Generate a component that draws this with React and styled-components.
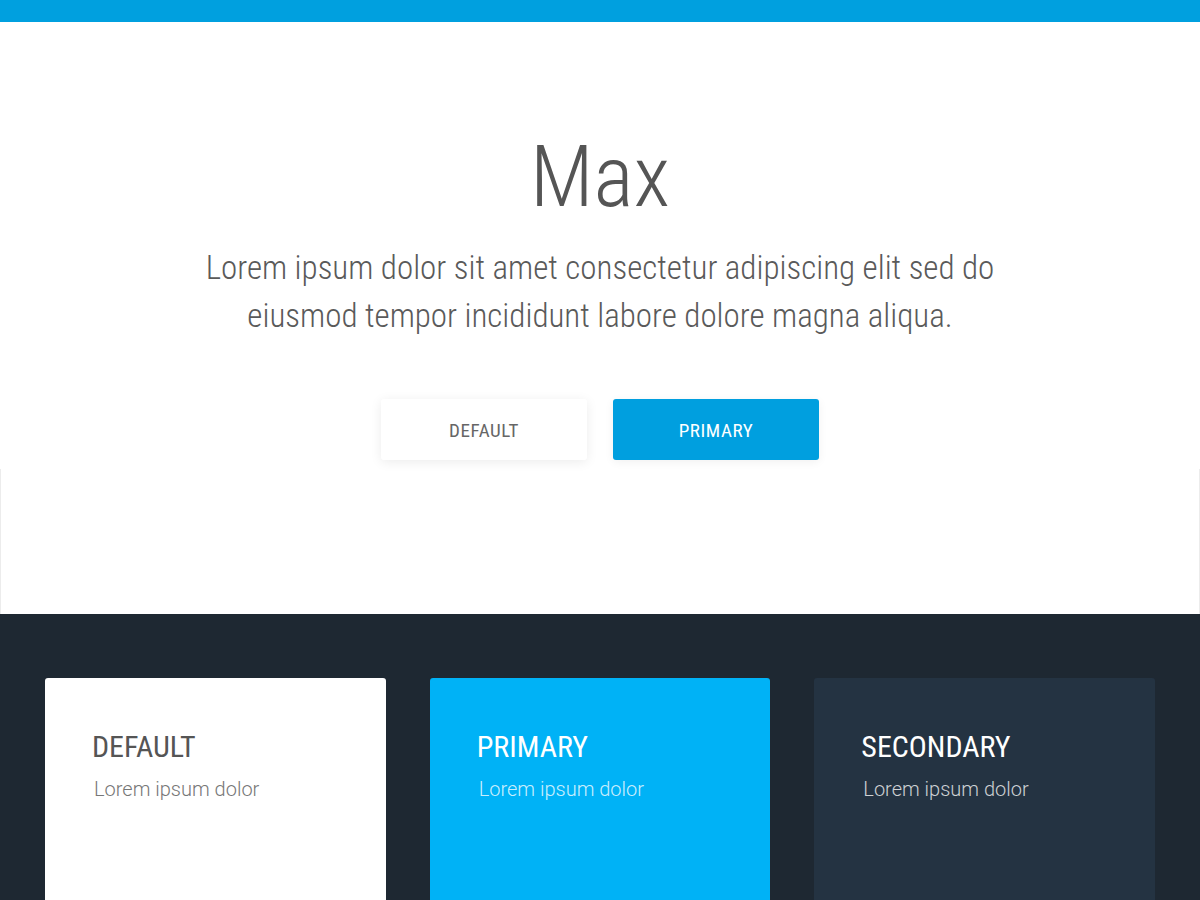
import * as React from "react";
import styled, { createGlobalStyle } from "styled-components";

const GlobalStyle = createGlobalStyle`
  html, body {
    margin: 0;
    padding: 0;
    background: #fff;
  }
  body {
    font-family: Roboto, "Noto Sans", sans-serif;
  }
`;

const cards = [
  { kind: "default", title: "DEFAULT" },
  { kind: "primary", title: "PRIMARY" },
  { kind: "secondary", title: "SECONDARY" },
];

export default function App() {
  return (
    <Page>
      <GlobalStyle />
      <TopBar />
      <Hero>
        <Title>Max</Title>
        <Lead>
          Lorem ipsum dolor sit amet consectetur adipiscing elit sed do
          <br />
          eiusmod tempor incididunt labore dolore magna aliqua.
        </Lead>
        <Actions>
          <Button>DEFAULT</Button>
          <Button $primary>PRIMARY</Button>
        </Actions>
      </Hero>
      <HeroFoot />
      <Dark>
        {cards.map((c) => (
          <Card key={c.kind} $kind={c.kind}>
            <CardTitle $kind={c.kind}>{c.title}</CardTitle>
            <CardText $kind={c.kind}>Lorem ipsum dolor</CardText>
          </Card>
        ))}
      </Dark>
    </Page>
  );
}

const Page = styled.div`
  width: 1200px;
  height: 900px;
  overflow: hidden;
  display: flex;
  flex-direction: column;
`;

const TopBar = styled.div`
  height: 22px;
  background: #00a0df;
  flex-shrink: 0;
`;

const Hero = styled.section`
  display: flex;
  flex-direction: column;
  align-items: center;
  padding-top: 113px;
  height: 447px;
  box-sizing: border-box;
  flex-shrink: 0;
`;

const HeroFoot = styled.div`
  height: 145px;
  border-left: 1px solid #ececec;
  border-right: 1px solid #ececec;
  flex-shrink: 0;
`;

const Title = styled.h1`
  margin: 0;
  font-family: Roboto, sans-serif;
  font-stretch: 75%;
  font-weight: 300;
  font-size: 85px;
  line-height: 1;
  color: #555;
`;

const Lead = styled.p`
  margin: 24px 0 0;
  font-family: Roboto, sans-serif;
  font-stretch: 75%;
  font-weight: 300;
  font-size: 33px;
  line-height: 48px;
  color: #5a5a5a;
  text-align: center;
  white-space: nowrap;
`;

const Actions = styled.div`
  display: flex;
  gap: 26px;
  margin-top: 59px;
`;

const Button = styled.button`
  width: 206px;
  height: 61px;
  padding: 2px 0 0;
  border: none;
  border-radius: 3px;
  font-family: Roboto, sans-serif;
  font-stretch: 75%;
  font-weight: 450;
  font-size: 19px;
  letter-spacing: 0.6px;
  cursor: pointer;
  color: ${(p) => (p.$primary ? "#fff" : "#666")};
  background: ${(p) => (p.$primary ? "#009fdf" : "#fff")};
  box-shadow: ${(p) =>
    p.$primary
      ? "0 2px 10px rgba(0,0,0,0.06)"
      : "0 2px 12px rgba(0,0,0,0.08)"};
`;

const Dark = styled.section`
  flex: 1;
  background: #1e2832;
  display: grid;
  grid-template-columns: repeat(3, 1fr);
  gap: 44px;
  padding: 64px 45px 0;
`;

const cardBg = { default: "#fff", primary: "#00b2f6", secondary: "#243342" };
const titleColor = { default: "#555", primary: "#fff", secondary: "#fff" };
const textColor = {
  default: "#777",
  primary: "rgba(255,255,255,0.8)",
  secondary: "rgba(255,255,255,0.78)",
};

const Card = styled.div`
  background: ${(p) => cardBg[p.$kind]};
  border-radius: 3px 3px 0 0;
  padding: 51px 47px;
  height: 400px;
`;

const CardTitle = styled.h3`
  margin: 0;
  font-family: Roboto, sans-serif;
  font-stretch: 75%;
  font-weight: 380;
  font-size: 30px;
  line-height: 36px;
  color: ${(p) => titleColor[p.$kind]};
`;

const CardText = styled.p`
  margin: 10px 0 0 2px;
  font-family: Roboto, sans-serif;
  font-weight: 300;
  font-size: 20px;
  line-height: 28px;
  color: ${(p) => textColor[p.$kind]};
`;
